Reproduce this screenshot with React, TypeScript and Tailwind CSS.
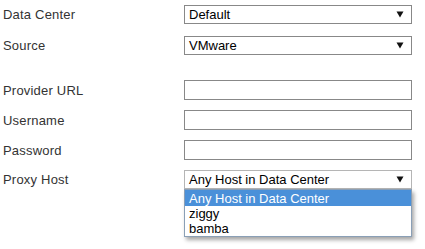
import React from 'react'

function Caret() {
  return (
    <svg width="8" height="7" viewBox="0 0 8 7" className="shrink-0">
      <path d="M0.5 0.5 L7.5 0.5 L4 6.5 Z" fill="#111" />
    </svg>
  )
}

function Select({ value, open }: { value: string; open?: boolean }) {
  return (
    <div className={`h-[19px] w-[228px] border bg-white flex items-center justify-between pl-[4px] pr-[7px] text-[13px] text-black leading-none ${open ? 'border-[#b5b5b5]' : 'border-[#888]'}`}>
      <span>{value}</span>
      <Caret />
    </div>
  )
}

function Input() {
  return <div className="h-[20px] w-[228px] border border-[#888] bg-white" />
}

function Row({ label, children, className }: { label: string; children: React.ReactNode; className?: string }) {
  return (
    <div className={`flex items-center ${className ?? ''}`}>
      <div className="w-[181px] text-[13px] leading-[15px] text-[#333] tracking-[0.2px]">{label}</div>
      {children}
    </div>
  )
}

export default function App() {
  const options = ['Any Host in Data Center', 'ziggy', 'bamba']
  return (
    <div className="w-[425px] h-[249px] bg-white pl-[3px] pt-[5px]" style={{ fontFamily: '"Liberation Sans", Arial, sans-serif' }}>
      <Row label="Data Center"><Select value="Default" /></Row>
      <Row label="Source" className="mt-[12px]"><Select value="VMware" /></Row>
      <Row label="Provider URL" className="mt-[25px]"><Input /></Row>
      <Row label="Username" className="mt-[10px]"><Input /></Row>
      <Row label="Password" className="mt-[10px]"><Input /></Row>
      <Row label="Proxy Host" className="mt-[10px]">
        <div className="relative">
          <Select value="Any Host in Data Center" open />
          <div className="absolute left-0 top-[19px] w-[228px] border border-[#8a9fb6] bg-white shadow-[2px_3px_4px_rgba(0,0,0,0.35)] text-[13px] leading-[15px] text-black">
            {options.map((o, i) => (
              <div key={o} className={`pl-[4px] ${i === 0 ? 'bg-[#4a90d9] text-white h-[16px] flex items-center' : ''}`}>{o}</div>
            ))}
          </div>
        </div>
      </Row>
    </div>
  )
}
